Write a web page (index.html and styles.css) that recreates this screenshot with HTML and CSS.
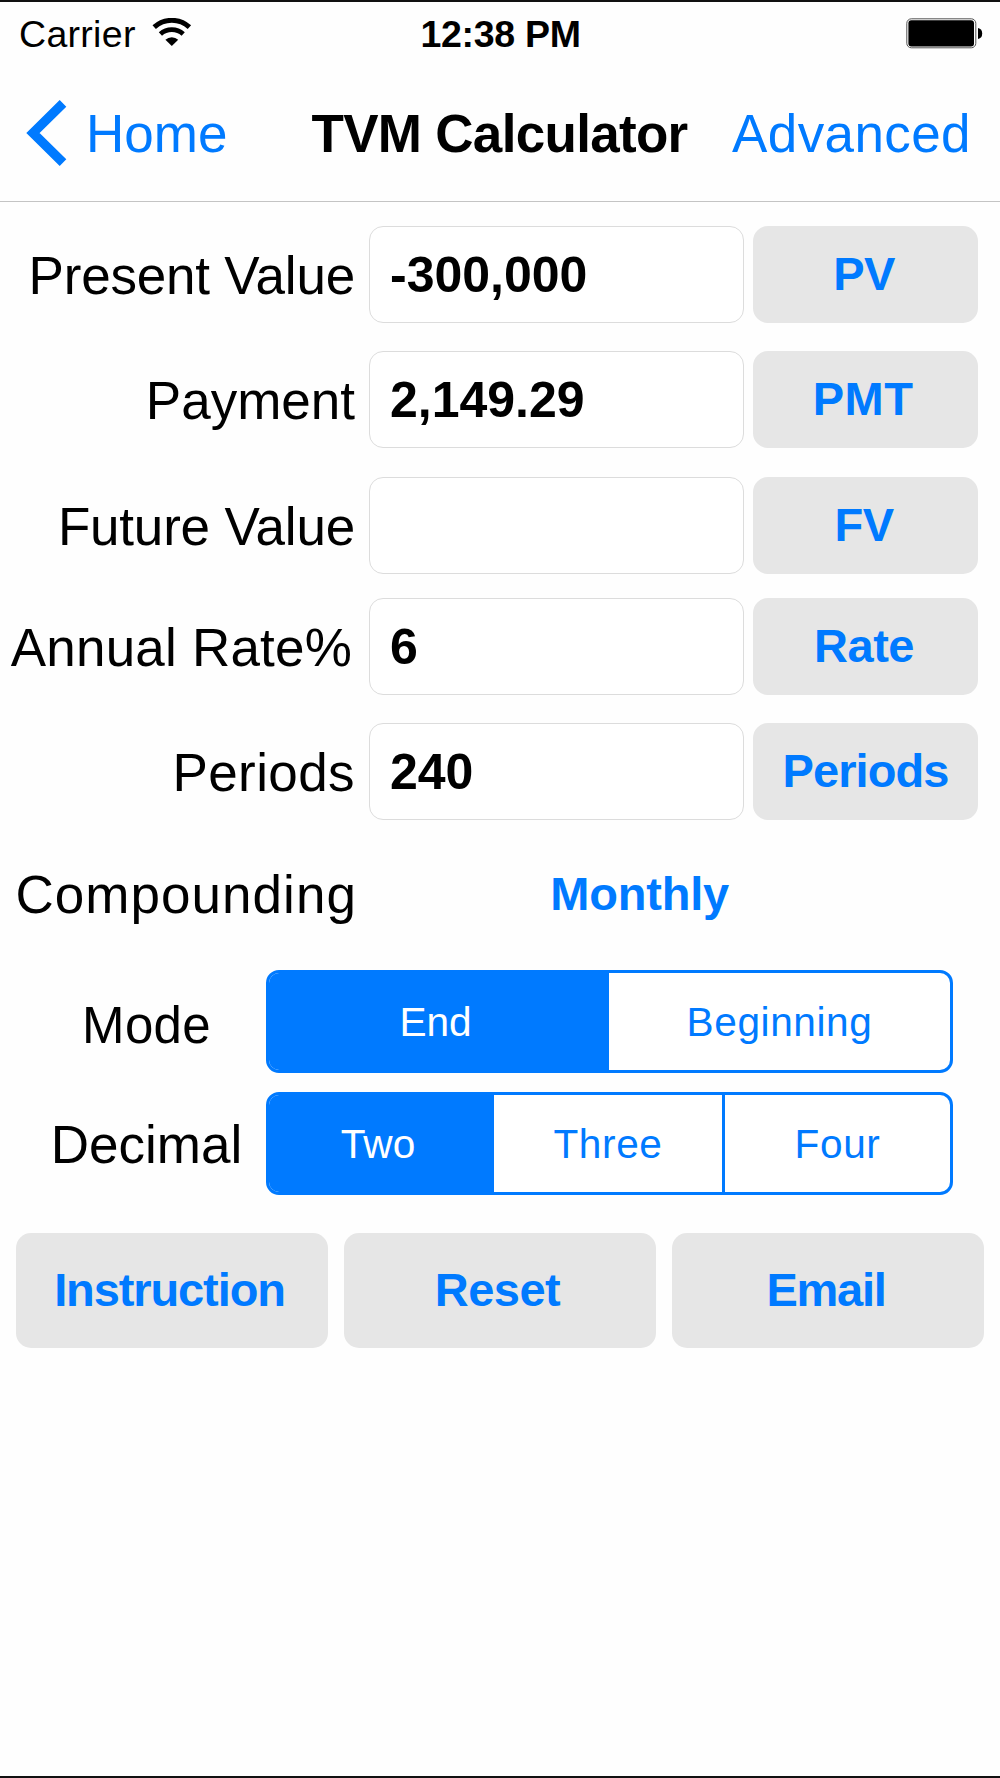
FILE: index.html
```html
<!DOCTYPE html>
<html>
<head>
  <meta charset="utf-8">
  <title>TVM Calculator</title>
  <link rel="stylesheet" href="styles.css">
</head>
<body>
  <div class="status-bar">
    <div class="carrier">
      <span>Carrier</span>
      <svg class="wifi" width="40" height="29" viewBox="0 0 40 29">
        <path d="M2.2 9.2 A26 26 0 0 1 37.4 9.2" fill="none" stroke="#000" stroke-width="5"/>
        <path d="M8.4 16 A17 17 0 0 1 31.2 16" fill="none" stroke="#000" stroke-width="4.8"/>
        <path d="M13.4 21.8 A9.4 9.4 0 0 1 26.2 21.8 L19.8 28 Z"/>
      </svg>
    </div>
    <div class="time">12:38 PM</div>
    <svg class="battery" width="77" height="31" viewBox="0 0 77 31">
      <rect x="0.8" y="0.8" width="69" height="29" rx="4.5" fill="none" stroke="#555" stroke-width="1"/>
      <rect x="2.4" y="2.2" width="65.6" height="26.2" rx="3"/>
      <path d="M72 10 A5.2 5.6 0 0 1 72 21 Z"/>
    </svg>
  </div>

  <div class="nav-bar">
    <a class="back">
      <svg width="41" height="66" viewBox="0 0 41 66">
        <path d="M37 3.4 L7 33 L37 62.6" fill="none" stroke="#007aff" stroke-width="9.4"/>
      </svg>
      <span>Home</span>
    </a>
    <h1>TVM Calculator</h1>
    <a class="advanced">Advanced</a>
  </div>

  <form class="calculator">
    <div class="row">
      <label for="pv">Present Value</label>
      <input type="text" id="pv" value="-300,000">
      <button type="button">PV</button>
    </div>
    <div class="row row-pmt">
      <label for="pmt">Payment</label>
      <input type="text" id="pmt" value="2,149.29">
      <button type="button">PMT</button>
    </div>
    <div class="row row-fv">
      <label for="fv">Future Value</label>
      <input type="text" id="fv" value="">
      <button type="button">FV</button>
    </div>
    <div class="row row-rate">
      <label for="rate">Annual Rate%</label>
      <input type="text" id="rate" value="6">
      <button type="button">Rate</button>
    </div>
    <div class="row row-periods">
      <label for="periods">Periods</label>
      <input type="text" id="periods" value="240">
      <button type="button">Periods</button>
    </div>
    <div class="compounding">
      <label>Compounding</label>
      <a>Monthly</a>
    </div>

    <div class="option">
      <span class="option-name mode-name">Mode</span>
      <div class="segmented two">
        <div class="segment selected">End</div>
        <div class="segment">Beginning</div>
      </div>
    </div>
    <div class="option">
      <span class="option-name">Decimal</span>
      <div class="segmented three">
        <div class="segment selected">Two</div>
        <div class="segment">Three</div>
        <div class="segment">Four</div>
      </div>
    </div>

    <div class="actions">
      <button type="button" class="instruction">Instruction</button>
      <button type="button">Reset</button>
      <button type="button" class="email">Email</button>
    </div>
  </form>
</body>
</html>
```
FILE: styles.css
```css
* {
  box-sizing: border-box;
}

body {
  margin: 0;
  height: 1778px;
  background: #fefefe;
  border-top: 2px solid #111;
  border-bottom: 2px solid #111;
  color: #000;
  font-family: "Liberation Sans", Arial, sans-serif;
  font-size: 53px;
}

.status-bar {
  display: grid;
  grid-template-columns: 1fr auto 1fr;
  align-items: center;
  height: 64px;
  padding: 0 17px 0 19px;
  font-size: 37.5px;
}

.carrier {
  display: flex;
  align-items: center;
  letter-spacing: 0.3px;
}

.wifi {
  margin: 0 0 3px 16px;
}

.time {
  padding-right: 1px;
  font-weight: bold;
  letter-spacing: -0.3px;
}

.battery {
  justify-self: end;
  margin-bottom: 2px;
}

.nav-bar {
  display: grid;
  grid-template-columns: 1fr auto 1fr;
  align-items: center;
  height: 136px;
  padding: 0 29px 0 26px;
  border-bottom: 1px solid #c4c4c4;
}

.nav-bar h1 {
  margin: 0;
  padding-left: 2px;
  font-size: 53px;
  letter-spacing: -0.7px;
}

a {
  color: #007aff;
}

.back {
  display: flex;
  align-items: center;
  gap: 19px;
}

.back svg {
  margin-bottom: 2px;
}

.advanced {
  justify-self: end;
  letter-spacing: 0.4px;
}

.calculator {
  padding-top: 24px;
}

.row {
  display: grid;
  grid-template-columns: 357px 375px 225px;
  align-items: center;
  height: 97px;
  margin-bottom: 28px;
}

.row label {
  padding: 1px 2px 0 0;
  text-align: right;
  white-space: nowrap;
  letter-spacing: -0.2px;
}

.row input {
  width: 375px;
  height: 97px;
  margin-left: 12px;
  padding: 0 20px;
  border: 1px solid #dcdcdc;
  border-radius: 14px;
  background: #fff;
  font: bold 50px "Liberation Sans", Arial, sans-serif;
}

button {
  border: none;
  border-radius: 15px;
  background: #e6e6e6;
  color: #007aff;
  font: bold 47px "Liberation Sans", Arial, sans-serif;
  letter-spacing: -0.5px;
}

.row button {
  width: 225px;
  height: 97px;
  margin-left: 21px;
  padding: 0 3px 2px 0;
}

.row-pmt {
  margin-bottom: 29px;
}

.row-pmt label {
  letter-spacing: 0;
}

.row-pmt button {
  padding-right: 5px;
  letter-spacing: 0.5px;
}

.row-fv {
  margin-bottom: 24px;
}

.row-rate label {
  padding-right: 5px;
  letter-spacing: 0.2px;
}

.row-periods label {
  letter-spacing: 0.4px;
}

.row-periods button {
  padding-right: 0;
  letter-spacing: -0.9px;
}

.compounding {
  display: grid;
  grid-template-columns: 357px 1fr;
  align-items: center;
  height: 92px;
  text-align: right;
}

.compounding label {
  letter-spacing: 1.05px;
}

.compounding a {
  padding: 0 271px 2px 0;
  font-size: 47px;
  font-weight: bold;
  letter-spacing: -0.2px;
}

.option {
  display: grid;
  grid-template-columns: 266px 687px;
  align-items: center;
  height: 103px;
  margin-top: 19px;
}

.compounding + .option {
  margin-top: 30px;
}

.option-name {
  padding: 2px 0 0 27px;
  text-align: center;
}

.mode-name {
  padding-top: 8px;
  font-size: 51px;
  letter-spacing: 0.3px;
}

.segmented {
  display: grid;
  height: 103px;
  overflow: hidden;
  border: 3px solid #007aff;
  border-radius: 13px;
  background: #fff;
  color: #007aff;
  font-size: 40.6px;
  letter-spacing: 0.6px;
}

.segmented.two {
  grid-template-columns: 340px 1fr;
}

.segmented.three {
  grid-template-columns: 225px 1fr 228px;
}

.segment {
  display: flex;
  align-items: center;
  justify-content: center;
  padding-top: 2px;
}

.segment + .segment {
  border-left: 3px solid #007aff;
}

.segment.selected {
  padding-right: 7px;
  background: #007aff;
  color: #fff;
  letter-spacing: 0;
}

.selected + .segment {
  border-left: none;
}

.actions {
  display: grid;
  grid-template-columns: repeat(3, 1fr);
  gap: 16px;
  margin: 38px 16px 0;
}

.actions button {
  height: 115px;
  padding: 0 5px 2px 0;
}

.actions .instruction {
  letter-spacing: -1.1px;
}

.actions .email {
  padding-right: 4px;
  letter-spacing: -1.3px;
}
```
